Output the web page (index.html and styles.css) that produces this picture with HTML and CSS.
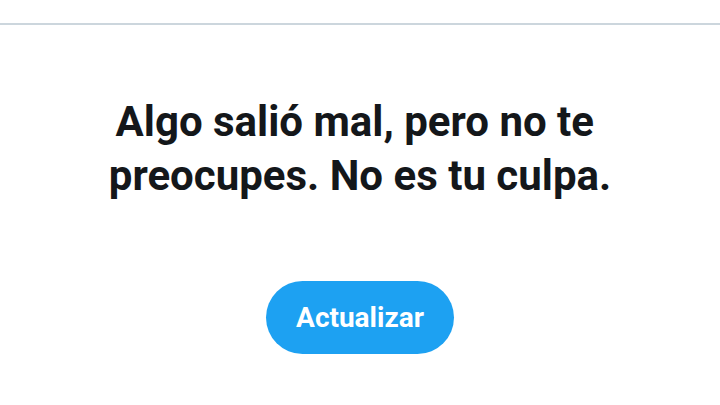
FILE: index.html
```html
<!DOCTYPE html>
<html lang="es">
<head>
<meta charset="utf-8">
<link rel="stylesheet" href="styles.css">
</head>
<body>
<div class="topbar"></div>
<main class="error">
  <h1 class="error-title">Algo salió mal, pero no te preocupes. No es tu culpa.</h1>
  <button class="refresh">Actualizar</button>
</main>
</body>
</html>
```
FILE: styles.css
```css
html, body {
  margin: 0;
  padding: 0;
  background: #fff;
  font-family: Roboto, "Noto Sans", sans-serif;
}
.topbar {
  height: 23px;
  border-bottom: 2px solid #ccd6dd;
}
.error {
  display: flex;
  flex-direction: column;
  align-items: center;
  padding-top: 70px;
}
.error-title {
  margin: 0;
  width: 560px;
  text-align: center;
  font-size: 42px;
  line-height: 54px;
  font-weight: 700;
  color: #14171a;
  white-space: break-spaces;
}
.refresh {
  margin-top: 78px;
  width: 188px;
  height: 73px;
  border: none;
  border-radius: 37px;
  background: #1da1f2;
  color: #fff;
  font-family: Roboto, sans-serif;
  font-weight: 700;
  font-size: 28px;
  cursor: pointer;
}
```
